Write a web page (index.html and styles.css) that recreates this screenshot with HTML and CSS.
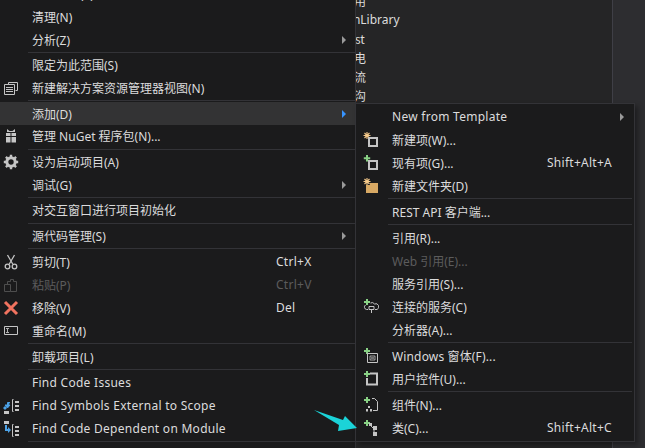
FILE: index.html
```html
<!DOCTYPE html>
<html lang="zh-CN">
<head>
    <meta charset="UTF-8">
    <meta name="viewport" content="width=device-width, initial-scale=1.0">
    <link rel="stylesheet" href="styles.css">
    <title>添加</title>
</head>
<body>

<div class="tree">
    <div class="tree-row">应用</div>
    <div class="tree-row tree-lib">MnLibrary</div>
    <div class="tree-row">Test</div>
    <div class="tree-row">充电</div>
    <div class="tree-row">电流</div>
    <div class="tree-row">通沟</div>
</div>
<div class="scroll-side"></div>

<!-- project context menu -->
<div class="menu menu-main">
    <div class="item"><span class="ico"></span><span class="label">重新生成(E)</span></div>
    <div class="item"><span class="ico"></span><span class="label">清理(N)</span></div>
    <div class="item"><span class="ico"></span><span class="label">分析(Z)</span><span class="key"><i class="arrow"></i></span></div>
    <div class="sep"></div>
    <div class="item"><span class="ico"></span><span class="label">限定为此范围(S)</span></div>
    <div class="item">
        <span class="ico">
            <svg width="16" height="16" viewBox="0 0 16 16" fill="none" stroke="#c5c5c5">
                <path d="M5.500 2.500h9v8h-2M5.500 2.500v2"/>
                <path d="M1.500 4.500h10v10h-10z"/>
                <path d="M3 7.500h7M3 9.500h7M3 11.500h7"/>
            </svg>
        </span>
        <span class="label">新建解决方案资源管理器视图(N)</span>
    </div>
    <div class="sep"></div>
    <div class="item active"><span class="ico"></span><span class="label">添加(D)</span><span class="key"><i class="arrow arrow-on"></i></span></div>
    <div class="item">
        <span class="ico">
            <svg width="16" height="16" viewBox="0 0 16 16" fill="#c5c5c5">
                <path d="M4 1l2.500 2L8 3l1.500 0L12 1v3H4zM3 5h4.500v3H3zM8.500 5H13v3H8.500zM3 9h4.500v5.500H3zM8.500 9H13v5.500H8.500z"/>
            </svg>
        </span>
        <span class="label">管理 NuGet 程序包(N)...</span>
    </div>
    <div class="sep"></div>
    <div class="item">
        <span class="ico">
            <svg width="16" height="16" viewBox="0 0 16 16" fill="none" stroke="#c5c5c5">
                <circle cx="8" cy="8" r="4.200" stroke-width="3"/>
                <path d="M8 .8v14.400M.8 8h14.400M2.900 2.900l10.200 10.200M13.100 2.900L2.900 13.100" stroke-width="2.400" stroke-dasharray="2.600 9.200"/>
            </svg>
        </span>
        <span class="label">设为启动项目(A)</span>
    </div>
    <div class="item"><span class="ico"></span><span class="label">调试(G)</span><span class="key"><i class="arrow"></i></span></div>
    <div class="sep"></div>
    <div class="item"><span class="ico"></span><span class="label">对交互窗口进行项目初始化</span></div>
    <div class="sep"></div>
    <div class="item"><span class="ico"></span><span class="label">源代码管理(S)</span><span class="key"><i class="arrow"></i></span></div>
    <div class="sep"></div>
    <div class="menu-low">
        <div class="item">
            <span class="ico">
                <svg width="16" height="16" viewBox="0 0 16 16" fill="none" stroke="#c5c5c5" stroke-width="1.300">
                    <path d="M4.500 1l5.200 9M11.500 1L6.300 10"/>
                    <circle cx="4.500" cy="12.500" r="2.300"/>
                    <circle cx="11.500" cy="12.500" r="2.300"/>
                </svg>
            </span>
            <span class="label">剪切(T)</span><span class="key latin">Ctrl+X</span>
        </div>
        <div class="item off">
            <span class="ico">
                <svg width="16" height="16" viewBox="0 0 16 16" fill="none" stroke="#4e4e4e">
                    <path d="M1.500 7.500h6v7h-6zM4.500 7.500v-3h3v-2h3v2h3v10h-6"/>
                </svg>
            </span>
            <span class="label">粘贴(P)</span><span class="key latin">Ctrl+V</span>
        </div>
        <div class="item">
            <span class="ico">
                <svg width="16" height="16" viewBox="0 0 16 16" fill="none" stroke="#f1735f" stroke-width="3">
                    <path d="M2 2l12 12M14 2L2 14"/>
                </svg>
            </span>
            <span class="label">移除(V)</span><span class="key latin">Del</span>
        </div>
        <div class="item">
            <span class="ico">
                <svg width="16" height="16" viewBox="0 0 16 16" fill="none" stroke="#c5c5c5">
                    <path d="M1.500 3.500h13v8h-13z"/>
                    <path d="M3 5.500h3M3 9.500h3M4.500 5.500v4" stroke="#b0b0b0"/>
                </svg>
            </span>
            <span class="label">重命名(M)</span>
        </div>
        <div class="sep"></div>
        <div class="item"><span class="ico"></span><span class="label">卸载项目(L)</span></div>
        <div class="sep"></div>
        <div class="item"><span class="ico"></span><span class="label latin">Find Code Issues</span></div>
        <div class="item">
            <span class="ico">
                <svg width="16" height="16" viewBox="0 0 16 16" fill="none">
                    <path d="M1 13h5v3H1z" fill="#c5c5c5"/>
                    <path d="M7 4.500H4.500V9M2 7l2.500 3L7 7zM1 9h2v2H1z" fill="#4da3e8" stroke="#4da3e8"/>
                    <path d="M10.500 1.500h-1v12h1" stroke="#c5c5c5"/>
                    <path d="M12 3h4v2h-4zM12 7h4v2h-4zM12 11h4v2h-4z" fill="#c5c5c5"/>
                </svg>
            </span>
            <span class="label latin">Find Symbols External to Scope</span>
        </div>
        <div class="item">
            <span class="ico">
                <svg width="16" height="16" viewBox="0 0 16 16" fill="none">
                    <path d="M1 0h5v3H1z" fill="#c5c5c5"/>
                    <path d="M3 4v5h3" stroke="#4da3e8" stroke-width="2"/>
                    <path d="M5 6l3 3-3 3z" fill="#4da3e8"/>
                    <path d="M10.500 3.500h-1v12h1" stroke="#c5c5c5"/>
                    <path d="M12 5h4v2h-4zM12 9h4v2h-4zM12 13h4v2h-4z" fill="#c5c5c5"/>
                </svg>
            </span>
            <span class="label latin">Find Code Dependent on Module</span>
        </div>
        <div class="sep"></div>
    </div>
</div>

<!-- add submenu -->
<div class="menu menu-sub">
    <div class="item"><span class="ico"></span><span class="label latin">New from Template</span><span class="key"><i class="arrow"></i></span></div>
    <div class="item">
        <span class="ico">
            <svg width="16" height="16" viewBox="0 0 16 16" fill="none">
                <path d="M4 0v7M.5 3.500h7M1.500 1l5 5M6.500 1l-5 5" stroke="#f5c98a" stroke-width="1.100"/>
                <path d="M6 6h8v8H6z" stroke="#c5c5c5" stroke-width="2"/>
            </svg>
        </span>
        <span class="label">新建项(W)...</span>
    </div>
    <div class="item">
        <span class="ico">
            <svg width="16" height="16" viewBox="0 0 16 16" fill="none">
                <path d="M4 0v6.500M.8 3.300h6.400" stroke="#89d185" stroke-width="2"/>
                <path d="M6 6h8v8H6z" stroke="#c5c5c5" stroke-width="2"/>
            </svg>
        </span>
        <span class="label">现有项(G)...</span><span class="key latin">Shift+Alt+A</span>
    </div>
    <div class="item">
        <span class="ico">
            <svg width="16" height="16" viewBox="0 0 16 16" fill="none">
                <path d="M3 7h4V5h8v10H3z" fill="#d8a964"/>
                <path d="M4 0v7M.5 3.500h7M1.500 1l5 5M6.500 1l-5 5" stroke="#f5c98a" stroke-width="1.100"/>
            </svg>
        </span>
        <span class="label">新建文件夹(D)</span>
    </div>
    <div class="sep"></div>
    <div class="item"><span class="ico"></span><span class="label">REST API 客户端...</span></div>
    <div class="sep"></div>
    <div class="item"><span class="ico"></span><span class="label">引用(R)...</span></div>
    <div class="item off"><span class="ico"></span><span class="label">Web 引用(E)...</span></div>
    <div class="item"><span class="ico"></span><span class="label">服务引用(S)...</span></div>
    <div class="item">
        <span class="ico">
            <svg width="16" height="16" viewBox="0 0 16 16" fill="none">
                <path d="M4 0v6M1 3h6" stroke="#89d185" stroke-width="2"/>
                <path d="M7.500 4a3 3 0 0 1 4 1a3 3 0 0 1 2.500 5.500h-2M5 10.500H3.500a2.500 2.500 0 0 1-1-4.500" stroke="#c5c5c5"/>
                <path d="M6 7.500h5v3H6zM8.500 10v4" stroke="#c5c5c5"/>
            </svg>
        </span>
        <span class="label">连接的服务(C)</span>
    </div>
    <div class="item"><span class="ico"></span><span class="label">分析器(A)...</span></div>
    <div class="sep"></div>
    <div class="item">
        <span class="ico">
            <svg width="16" height="16" viewBox="0 0 16 16" fill="none">
                <path d="M4 0v6M1 3h6" stroke="#89d185" stroke-width="2"/>
                <path d="M4.500 5.500h10v9h-10z" stroke="#c5c5c5"/>
                <path d="M7 8h5v4H7z" stroke="#c5c5c5" stroke-width=".8"/>
                <path d="M8 10h3" stroke="#c5c5c5"/>
            </svg>
        </span>
        <span class="label latin-mix">Windows 窗体(F)...</span>
    </div>
    <div class="item">
        <span class="ico">
            <svg width="16" height="16" viewBox="0 0 16 16" fill="none">
                <path d="M7 2.500h7v11H4V7" stroke="#c5c5c5" stroke-width="2"/>
                <path d="M4 0v6M1 3h6" stroke="#89d185" stroke-width="2"/>
            </svg>
        </span>
        <span class="label">用户控件(U)...</span>
    </div>
    <div class="sep"></div>
    <div class="item">
        <span class="ico">
            <svg width="16" height="16" viewBox="0 0 16 16" fill="none">
                <path d="M4 0v6M1 3h6" stroke="#89d185" stroke-width="2"/>
                <path d="M9 1.500h2.500l3 3v9H10" stroke="#c5c5c5"/>
                <path d="M5 9h2v2H5zM3 12h2v2.500H3zM7 12h2v2.500H7z" fill="#c5c5c5"/>
            </svg>
        </span>
        <span class="label">组件(N)...</span>
    </div>
    <div class="item">
        <span class="ico">
            <svg width="16" height="16" viewBox="0 0 16 16" fill="none">
                <path d="M4 0v6M1 3h6" stroke="#89d185" stroke-width="2"/>
                <path d="M7 5l4 4M11 9v4" stroke="#c5c5c5"/>
                <path d="M6 3h3v3H6zM10 6h4v4h-4zM10 12h4v4h-4z" fill="#c5c5c5"/>
            </svg>
        </span>
        <span class="label">类(C)...</span><span class="key latin">Shift+Alt+C</span>
    </div>
</div>

<!-- annotation arrow drawn over the screenshot -->
<svg class="pointer" width="50" height="30" viewBox="0 0 50 30">
    <path d="M3 2L32 12L34 8L46 20L27 23L28 17z" fill="#1bd3d8"/>
</svg>

</body>
</html>
```

FILE: styles.css
```css
html, body {
    margin: 0;
    height: 100%;
    overflow: hidden;
}

body {
    position: relative;
    background-color: #252526;
    color: #dcdcdc;
    font-family: "Noto Sans", "Noto Sans CJK SC", sans-serif;
    font-size: 12px;
}

.tree {
    padding: 0 0 0 342px;
    margin-top: -9px;
    font-family: "Noto Sans CJK SC", sans-serif;
}

.tree-row {
    height: 19px;
    line-height: 19px;
}

.tree-lib {
    font-family: "Noto Sans", sans-serif;
}

.scroll-side {
    position: absolute;
    top: 0;
    right: 0;
    bottom: 0;
    width: 32px;
    border-left: 1px solid #3f3f46;
    background-color: #2d2d30;
}

.menu {
    position: absolute;
    background-color: #1b1b1c;
    box-sizing: border-box;
}

.menu-main {
    top: -17px;
    left: 0;
    width: 356px;
    height: 480px;
    border-right: 1px solid #333337;
}

.menu-sub {
    top: 103px;
    left: 355px;
    width: 280px;
    height: 339px;
    padding: 1px 0;
    border: 1px solid #333337;
    box-shadow: 3px 3px 5px rgba(0, 0, 0, 0.35);
}

.item {
    display: flex;
    align-items: center;
    height: 22.67px;
}

.menu-low .item,
.menu-sub .item {
    height: 23px;
}

.ico {
    flex: none;
    display: flex;
    align-items: center;
    width: 25px;
    height: 16px;
    padding-left: 3px;
}

.menu-sub .ico {
    width: 25px;
    padding-left: 7px;
}

.label {
    flex: 1;
    padding-left: 4px;
    white-space: nowrap;
}

.latin {
    letter-spacing: 0.27px;
}

.latin-mix {
    letter-spacing: 0.15px;
}

.key {
    flex: none;
    width: 79px;
    position: relative;
}

.menu-sub .key {
    width: 87px;
}

.arrow {
    position: absolute;
    right: 9px;
    top: -4px;
    border-left: 4px solid #9a9a9a;
    border-top: 4px solid transparent;
    border-bottom: 4px solid transparent;
}

.menu-sub .arrow {
    right: 10px;
}

.arrow-on {
    border-left-color: #3794ff;
}

.active {
    background-color: #333334;
}

.off {
    color: #5c5c5c;
}

.sep {
    height: 1px;
    margin: 1px 0 1px 28px;
    background-color: #333337;
}

.menu-sub .sep {
    margin-left: 32px;
    margin-right: 2px;
}

.pointer {
    position: absolute;
    left: 311px;
    top: 408px;
}
```
